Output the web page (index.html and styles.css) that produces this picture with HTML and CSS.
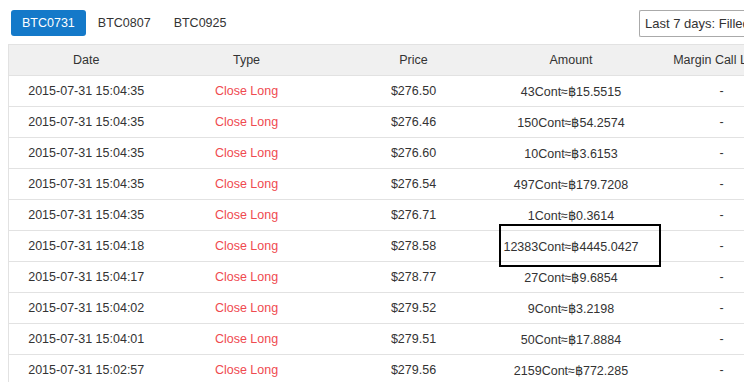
FILE: index.html
```html
<!DOCTYPE html>
<html>
<head>
<meta charset="utf-8">
<link rel="stylesheet" href="styles.css">
</head>
<body>
<div class="page">
  <div class="toolbar">
    <div class="tabs">
      <span class="tab active">BTC0731</span>
      <span class="tab">BTC0807</span>
      <span class="tab">BTC0925</span>
    </div>
    <div class="select">Last 7 days: Filled Orders</div>
  </div>
  <div class="table-wrap">
    <table class="orders">
      <colgroup>
        <col class="c-date"><col class="c-type"><col class="c-price"><col class="c-amount"><col class="c-margin">
      </colgroup>
      <thead>
        <tr><th>Date</th><th>Type</th><th>Price</th><th>Amount</th><th>Margin Call Level</th></tr>
      </thead>
      <tbody>
        <tr><td>2015-07-31 15:04:35</td><td class="red">Close Long</td><td>$276.50</td><td>43Cont≈฿15.5515</td><td>-</td></tr>
        <tr><td>2015-07-31 15:04:35</td><td class="red">Close Long</td><td>$276.46</td><td>150Cont≈฿54.2574</td><td>-</td></tr>
        <tr><td>2015-07-31 15:04:35</td><td class="red">Close Long</td><td>$276.60</td><td>10Cont≈฿3.6153</td><td>-</td></tr>
        <tr><td>2015-07-31 15:04:35</td><td class="red">Close Long</td><td>$276.54</td><td>497Cont≈฿179.7208</td><td>-</td></tr>
        <tr><td>2015-07-31 15:04:35</td><td class="red">Close Long</td><td>$276.71</td><td>1Cont≈฿0.3614</td><td>-</td></tr>
        <tr><td>2015-07-31 15:04:18</td><td class="red">Close Long</td><td>$278.58</td><td class="boxed"><span class="mark"></span>12383Cont≈฿4445.0427</td><td>-</td></tr>
        <tr><td>2015-07-31 15:04:17</td><td class="red">Close Long</td><td>$278.77</td><td>27Cont≈฿9.6854</td><td>-</td></tr>
        <tr><td>2015-07-31 15:04:02</td><td class="red">Close Long</td><td>$279.52</td><td>9Cont≈฿3.2198</td><td>-</td></tr>
        <tr><td>2015-07-31 15:04:01</td><td class="red">Close Long</td><td>$279.51</td><td>50Cont≈฿17.8884</td><td>-</td></tr>
        <tr><td>2015-07-31 15:02:57</td><td class="red">Close Long</td><td>$279.56</td><td>2159Cont≈฿772.285</td><td>-</td></tr>
      </tbody>
    </table>
  </div>
</div>
</body>
</html>
```
FILE: styles.css
```css
html, body {
  margin: 0;
  padding: 0;
  background: #fff;
  overflow: hidden;
}
body {
  font-family: "Liberation Sans", Arial, sans-serif;
  font-size: 12.5px;
  color: #333;
}
.page {
  padding: 10px 0 0 8px;
}
.toolbar {
  display: flex;
  justify-content: space-between;
  align-items: flex-start;
  height: 34px;
}
.tabs {
  display: flex;
  padding-left: 3px;
}
.tab {
  display: block;
  height: 26px;
  line-height: 26px;
  padding: 0 11px;
  font-size: 12.5px;
  color: #333;
  border-radius: 3px;
  margin-right: 1px;
}
.tab.active {
  background: #1479c9;
  color: #fff;
}
.select {
  width: 130px;
  height: 25px;
  line-height: 25px;
  border: 1px solid #aaa;
  border-right: none;
  border-radius: 2px 0 0 2px;
  padding-left: 5px;
  white-space: nowrap;
  overflow: hidden;
  font-size: 13px;
  color: #333;
  margin-right: -31px;
}
.table-wrap {
  width: 800px;
}
.orders {
  width: 790px;
  border-collapse: collapse;
  table-layout: fixed;
  border-left: 1px solid #e2e2e2;
}
.c-date { width: 155px; }
.c-type { width: 166px; }
.c-price { width: 168px; }
.c-amount { width: 147px; }
.c-margin { width: 154px; }
.orders th {
  background: #f0f0f0;
  font-weight: normal;
  height: 30px;
  padding: 0;
  text-align: center;
  border-top: 1px solid #e2e2e2;
  border-bottom: 1px solid #e2e2e2;
  white-space: nowrap;
}
.orders td {
  height: 30px;
  padding: 0;
  text-align: center;
  border-bottom: 1px solid #e2e2e2;
  white-space: nowrap;
}
.orders td.red {
  color: #ef4a50;
}
.boxed {
  position: relative;
}
.mark {
  position: absolute;
  left: 1px;
  top: -7px;
  width: 162px;
  height: 43px;
  border: 2px solid #000;
  box-sizing: border-box;
}
```
